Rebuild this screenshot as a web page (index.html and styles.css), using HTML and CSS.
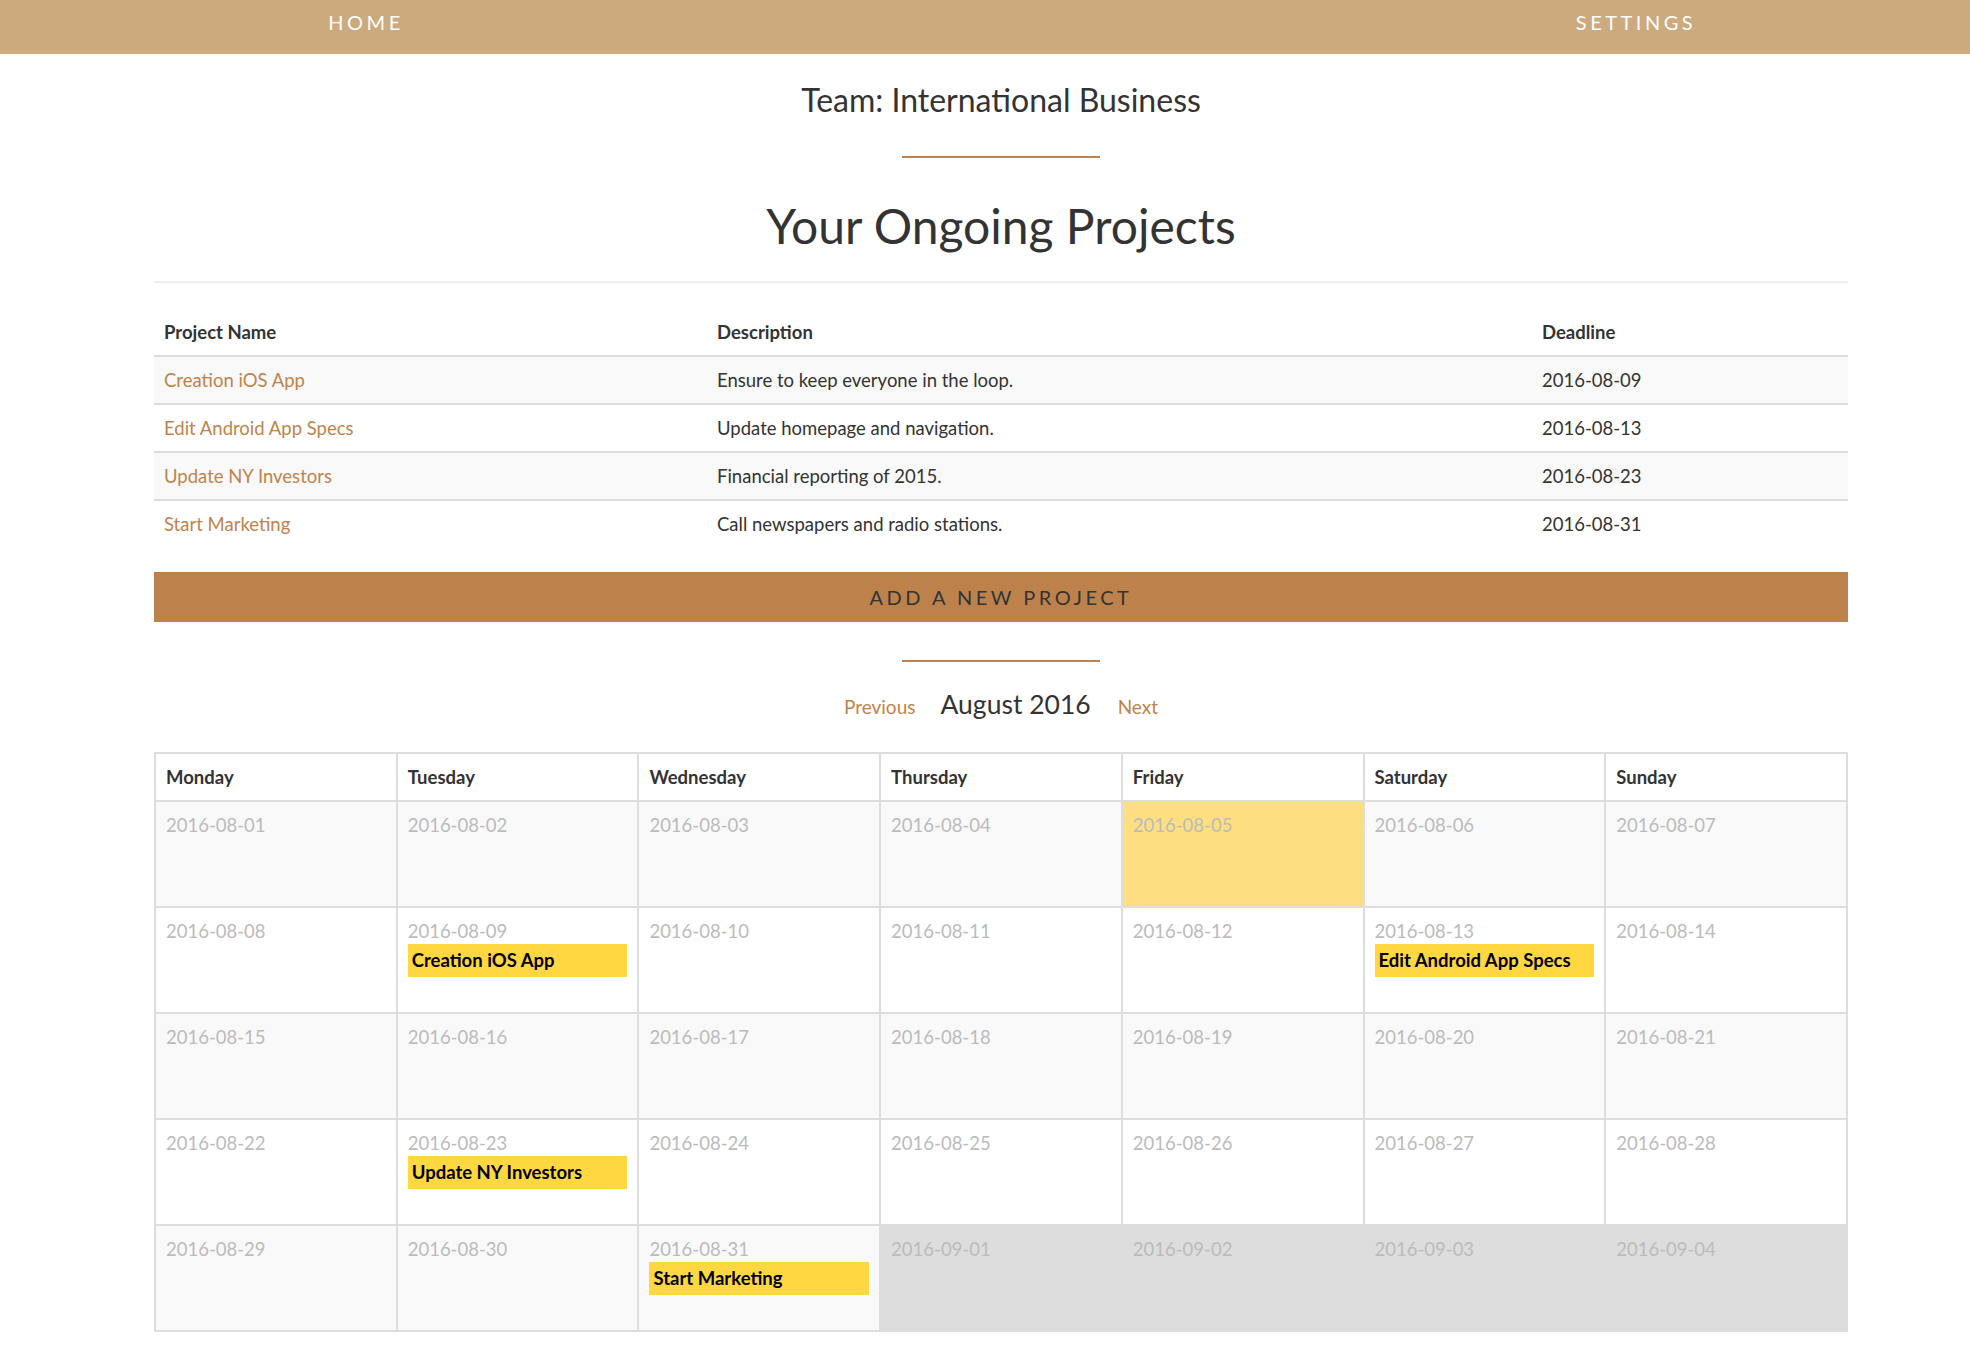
FILE: index.html
```html
<!DOCTYPE html>
<html>
<head>
<meta charset="utf-8">
<title>Team: International Business</title>
<link rel="stylesheet" href="styles.css">
</head>
<body>
<nav class="topnav">
  <div class="topnav-inner">
    <a class="navlink" href="#">HOME</a>
    <a class="navlink" href="#">SETTINGS</a>
  </div>
</nav>
<main class="container">
  <h2 class="team">Team: International Business</h2>
  <div class="accent-line"></div>
  <h1 class="page-title">Your Ongoing Projects</h1>
  <div class="rule"></div>

  <table class="projects">
    <colgroup>
      <col class="c-name">
      <col class="c-desc">
      <col class="c-date">
    </colgroup>
    <thead>
      <tr><th>Project Name</th><th>Description</th><th>Deadline</th></tr>
    </thead>
    <tbody>
      <tr><td><a href="#">Creation iOS App</a></td><td>Ensure to keep everyone in the loop.</td><td>2016-08-09</td></tr>
      <tr><td><a href="#">Edit Android App Specs</a></td><td>Update homepage and navigation.</td><td>2016-08-13</td></tr>
      <tr><td><a href="#">Update NY Investors</a></td><td>Financial reporting of 2015.</td><td>2016-08-23</td></tr>
      <tr><td><a href="#">Start Marketing</a></td><td>Call newspapers and radio stations.</td><td>2016-08-31</td></tr>
    </tbody>
  </table>

  <button class="add-btn" type="button">ADD A NEW PROJECT</button>

  <div class="accent-line accent-line--second"></div>

  <div class="month-nav">
    <a class="month-link" href="#">Previous</a>
    <span class="month-name">August 2016</span>
    <a class="month-link" href="#">Next</a>
  </div>

  <table class="calendar">
    <thead>
      <tr><th>Monday</th><th>Tuesday</th><th>Wednesday</th><th>Thursday</th><th>Friday</th><th>Saturday</th><th>Sunday</th></tr>
    </thead>
    <tbody>
      <tr class="odd">
        <td><span class="day">2016-08-01</span></td>
        <td><span class="day">2016-08-02</span></td>
        <td><span class="day">2016-08-03</span></td>
        <td><span class="day">2016-08-04</span></td>
        <td class="today"><span class="day">2016-08-05</span></td>
        <td><span class="day">2016-08-06</span></td>
        <td><span class="day">2016-08-07</span></td>
      </tr>
      <tr>
        <td><span class="day">2016-08-08</span></td>
        <td><span class="day">2016-08-09</span><span class="event">Creation iOS App</span></td>
        <td><span class="day">2016-08-10</span></td>
        <td><span class="day">2016-08-11</span></td>
        <td><span class="day">2016-08-12</span></td>
        <td><span class="day">2016-08-13</span><span class="event">Edit Android App Specs</span></td>
        <td><span class="day">2016-08-14</span></td>
      </tr>
      <tr class="odd">
        <td><span class="day">2016-08-15</span></td>
        <td><span class="day">2016-08-16</span></td>
        <td><span class="day">2016-08-17</span></td>
        <td><span class="day">2016-08-18</span></td>
        <td><span class="day">2016-08-19</span></td>
        <td><span class="day">2016-08-20</span></td>
        <td><span class="day">2016-08-21</span></td>
      </tr>
      <tr>
        <td><span class="day">2016-08-22</span></td>
        <td><span class="day">2016-08-23</span><span class="event">Update NY Investors</span></td>
        <td><span class="day">2016-08-24</span></td>
        <td><span class="day">2016-08-25</span></td>
        <td><span class="day">2016-08-26</span></td>
        <td><span class="day">2016-08-27</span></td>
        <td><span class="day">2016-08-28</span></td>
      </tr>
      <tr class="odd">
        <td><span class="day">2016-08-29</span></td>
        <td><span class="day">2016-08-30</span></td>
        <td><span class="day">2016-08-31</span><span class="event">Start Marketing</span></td>
        <td class="other"><span class="day">2016-09-01</span></td>
        <td class="other"><span class="day">2016-09-02</span></td>
        <td class="other"><span class="day">2016-09-03</span></td>
        <td class="other"><span class="day">2016-09-04</span></td>
      </tr>
    </tbody>
  </table>
</main>
</body>
</html>
```

FILE: styles.css
```css
* { box-sizing: border-box; }

html, body {
  margin: 0;
  padding: 0;
  background: #fff;
}

body {
  font-family: Lato, "Open Sans", "Liberation Sans", sans-serif;
  color: #333;
  font-size: 18.5px;
  line-height: 26px;
}

a { text-decoration: none; }

.topnav {
  height: 54px;
  background: #cdaa7d;
}

.topnav-inner {
  width: 1694px;
  margin-left: 154px;
  display: flex;
  justify-content: space-between;
}

.navlink {
  width: 424px;
  text-align: center;
  color: #fff;
  font-size: 20px;
  line-height: 24px;
  letter-spacing: 3.5px;
  padding-top: 10px;
}

.container {
  width: 1694px;
  margin-left: 154px;
  padding-bottom: 40px;
}

.team {
  margin: 26px 0 0;
  font-size: 32px;
  line-height: 40px;
  font-weight: 400;
  text-align: center;
  color: #333;
}

.accent-line {
  width: 198px;
  height: 2px;
  margin: 36px auto 0;
  background: #bf8049;
}

.accent-line--second {
  margin-top: 38px;
}

.page-title {
  margin: 41px 0 0;
  font-size: 48px;
  line-height: 54px;
  font-weight: 400;
  text-align: center;
  color: #333;
}

.rule {
  height: 2px;
  background: #eee;
  margin-top: 28px;
}

.projects {
  width: 100%;
  margin-top: 26px;
  border-collapse: collapse;
  table-layout: fixed;
}

.c-name { width: 553px; }
.c-desc { width: 825px; }
.c-date { width: 316px; }

.projects th {
  text-align: left;
  font-weight: 700;
  padding: 10px;
  border-bottom: 2px solid #ddd;
}

.projects td {
  padding: 10px;
  border-top: 2px solid #ddd;
}

.projects tbody tr:nth-child(odd) td { background: #f9f9f9; }

.projects a { color: #c0834b; }

.add-btn {
  display: block;
  width: 100%;
  height: 50px;
  margin-top: 25px;
  border: 0;
  background: #bd824b;
  color: #333;
  font-family: inherit;
  font-size: 20px;
  letter-spacing: 3.5px;
  text-align: center;
  padding: 0;
}

.month-nav {
  margin-top: 24px;
  display: flex;
  justify-content: center;
  align-items: baseline;
  line-height: 36px;
}

.month-link {
  color: #c0834b;
  font-size: 19px;
}

.month-name {
  font-size: 26.5px;
  color: #333;
  margin: 0 27px 0 25px;
}

.calendar {
  width: 100%;
  margin-top: 27px;
  border-collapse: collapse;
  table-layout: fixed;
  border: 2px solid #ddd;
}

.calendar th {
  text-align: left;
  font-weight: 700;
  padding: 10px;
  border: 2px solid #ddd;
}

.calendar td {
  vertical-align: top;
  padding: 10px;
  height: 106px;
  border: 2px solid #ddd;
  background: #fff;
}

.calendar tr.odd td { background: #f9f9f9; }
.calendar tr.odd td.other { background: #dddddd; }
.calendar tr td.today { background: #fddf82; }

.day {
  display: block;
  color: #bbb;
}

.event {
  display: block;
  background: #ffd740;
  color: #000;
  font-weight: 700;
  line-height: 25px;
  padding: 4px 4px;
}
```
